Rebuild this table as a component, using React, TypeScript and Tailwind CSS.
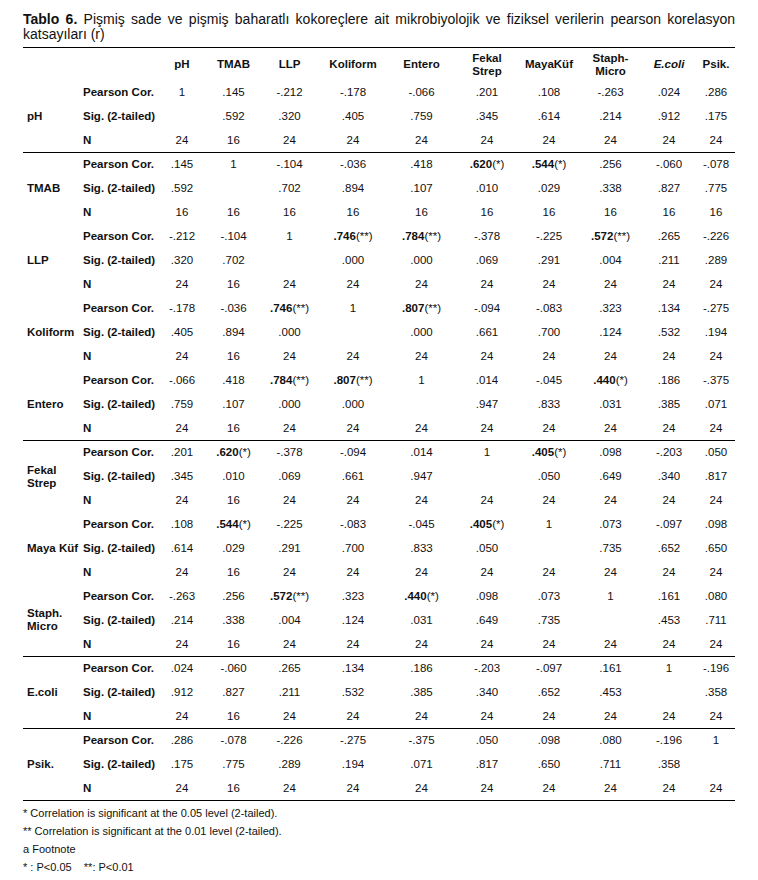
import React from "react";

type Group = {
    label: string[];
    pearson: string[];
    sig: string[];
    n: string[];
};

const cols: { name: string[]; italic?: boolean }[] = [
    { name: ["pH"] },
    { name: ["TMAB"] },
    { name: ["LLP"] },
    { name: ["Koliform"] },
    { name: ["Entero"] },
    { name: ["Fekal", "Strep"] },
    { name: ["MayaKüf"] },
    { name: ["Staph-", "Micro"] },
    { name: ["E.coli"], italic: true },
    { name: ["Psik."] },
];

const n24 = ["24", "16", "24", "24", "24", "24", "24", "24", "24", "24"];

const groups: Group[] = [
    {
        label: ["pH"],
        pearson: ["1", ".145", "-.212", "-.178", "-.066", ".201", ".108", "-.263", ".024", ".286"],
        sig: ["", ".592", ".320", ".405", ".759", ".345", ".614", ".214", ".912", ".175"],
        n: n24,
    },
    {
        label: ["TMAB"],
        pearson: [".145", "1", "-.104", "-.036", ".418", ".620(*)", ".544(*)", ".256", "-.060", "-.078"],
        sig: [".592", "", ".702", ".894", ".107", ".010", ".029", ".338", ".827", ".775"],
        n: ["16", "16", "16", "16", "16", "16", "16", "16", "16", "16"],
    },
    {
        label: ["LLP"],
        pearson: ["-.212", "-.104", "1", ".746(**)", ".784(**)", "-.378", "-.225", ".572(**)", ".265", "-.226"],
        sig: [".320", ".702", "", ".000", ".000", ".069", ".291", ".004", ".211", ".289"],
        n: n24,
    },
    {
        label: ["Koliform"],
        pearson: ["-.178", "-.036", ".746(**)", "1", ".807(**)", "-.094", "-.083", ".323", ".134", "-.275"],
        sig: [".405", ".894", ".000", "", ".000", ".661", ".700", ".124", ".532", ".194"],
        n: n24,
    },
    {
        label: ["Entero"],
        pearson: ["-.066", ".418", ".784(**)", ".807(**)", "1", ".014", "-.045", ".440(*)", ".186", "-.375"],
        sig: [".759", ".107", ".000", ".000", "", ".947", ".833", ".031", ".385", ".071"],
        n: n24,
    },
    {
        label: ["Fekal", "Strep"],
        pearson: [".201", ".620(*)", "-.378", "-.094", ".014", "1", ".405(*)", ".098", "-.203", ".050"],
        sig: [".345", ".010", ".069", ".661", ".947", "", ".050", ".649", ".340", ".817"],
        n: n24,
    },
    {
        label: ["Maya Küf"],
        pearson: [".108", ".544(*)", "-.225", "-.083", "-.045", ".405(*)", "1", ".073", "-.097", ".098"],
        sig: [".614", ".029", ".291", ".700", ".833", ".050", "", ".735", ".652", ".650"],
        n: n24,
    },
    {
        label: ["Staph.", "Micro"],
        pearson: ["-.263", ".256", ".572(**)", ".323", ".440(*)", ".098", ".073", "1", ".161", ".080"],
        sig: [".214", ".338", ".004", ".124", ".031", ".649", ".735", "", ".453", ".711"],
        n: n24,
    },
    {
        label: ["E.coli"],
        pearson: [".024", "-.060", ".265", ".134", ".186", "-.203", "-.097", ".161", "1", "-.196"],
        sig: [".912", ".827", ".211", ".532", ".385", ".340", ".652", ".453", "", ".358"],
        n: n24,
    },
    {
        label: ["Psik."],
        pearson: [".286", "-.078", "-.226", "-.275", "-.375", ".050", ".098", ".080", "-.196", "1"],
        sig: [".175", ".775", ".289", ".194", ".071", ".817", ".650", ".711", ".358", ""],
        n: n24,
    },
];

// groups that get a rule under them
const ruled = ["pH", "Entero", "Staph.", "E.coli", "Psik."];

function Value({ v }: { v: string }) {
    const m = v.match(/^(.*?)(\(\*+\))$/);
    if (!m) return <>{v}</>;
    return (
        <>
            <span className="font-bold">{m[1]}</span>
            {m[2]}
        </>
    );
}

export default function App() {
    return (
        <div className="min-h-screen bg-white px-[23px] pt-[12px] text-[#111]" style={{ fontFamily: '"Liberation Sans", Arial, sans-serif' }}>
            {/* Title */}
            <div className="text-[14px] leading-[15px]">
                <p className="text-justify [text-align-last:justify]">
                    <span className="font-bold">Tablo 6.</span> Pişmiş sade ve pişmiş baharatlı kokoreçlere ait mikrobiyolojik ve fiziksel verilerin pearson korelasyon
                </p>
                <p>katsayıları (r)</p>
            </div>

            <table className="mt-[5px] w-[712px] table-fixed border-collapse text-[11.5px]">
                <colgroup>
                    <col className="w-[55px]" />
                    <col className="w-[79px]" />
                    <col className="w-[50px]" />
                    <col className="w-[53px]" />
                    <col className="w-[59px]" />
                    <col className="w-[68px]" />
                    <col className="w-[69px]" />
                    <col className="w-[62px]" />
                    <col className="w-[62px]" />
                    <col className="w-[61px]" />
                    <col className="w-[56px]" />
                    <col className="w-[38px]" />
                </colgroup>
                <thead>
                    <tr className="h-[33px] border-t border-b-0 border-black">
                        <th />
                        <th />
                        {cols.map((c) => (
                            <th
                                key={c.name.join("")}
                                className={`p-0 pt-[1px] text-center align-middle font-bold leading-[13px] ${c.italic ? "italic" : ""}`}
                            >
                                {c.name.map((line) => (
                                    <div key={line}>{line}</div>
                                ))}
                            </th>
                        ))}
                    </tr>
                </thead>
                <tbody>
                    {groups.map((g) => {
                        const border = ruled.includes(g.label[0]) ? "border-b border-black" : "";
                        return (
                            <React.Fragment key={g.label.join("")}>
                                <tr className="h-[24px]">
                                    <td rowSpan={3} className={`p-0 pl-[4px] align-middle font-bold leading-[13px] whitespace-nowrap ${border}`}>
                                        {g.label.map((line) => (
                                            <div key={line}>{line}</div>
                                        ))}
                                    </td>
                                    <td className="p-0 pl-[5px] font-bold">Pearson Cor.</td>
                                    {g.pearson.map((v, i) => (
                                        <td key={i} className="p-0 text-center whitespace-nowrap">
                                            <Value v={v} />
                                        </td>
                                    ))}
                                </tr>
                                <tr className="h-[24px]">
                                    <td className="p-0 pl-[5px] font-bold whitespace-nowrap">Sig. (2-tailed)</td>
                                    {g.sig.map((v, i) => (
                                        <td key={i} className="p-0 text-center">
                                            {v}
                                        </td>
                                    ))}
                                </tr>
                                <tr className={`h-[24px] ${border}`}>
                                    <td className="p-0 pl-[5px] font-bold">N</td>
                                    {g.n.map((v, i) => (
                                        <td key={i} className="p-0 text-center">
                                            {v}
                                        </td>
                                    ))}
                                </tr>
                            </React.Fragment>
                        );
                    })}
                </tbody>
            </table>

            {/* Footnotes */}
            <div className="mt-[3px] text-[11px] leading-[18px]">
                <p>* Correlation is significant at the 0.05 level (2-tailed).</p>
                <p>** Correlation is significant at the 0.01 level (2-tailed).</p>
                <p>a Footnote</p>
                <p className="whitespace-pre">{"* : P<0.05    **: P<0.01"}</p>
            </div>
        </div>
    );
}
